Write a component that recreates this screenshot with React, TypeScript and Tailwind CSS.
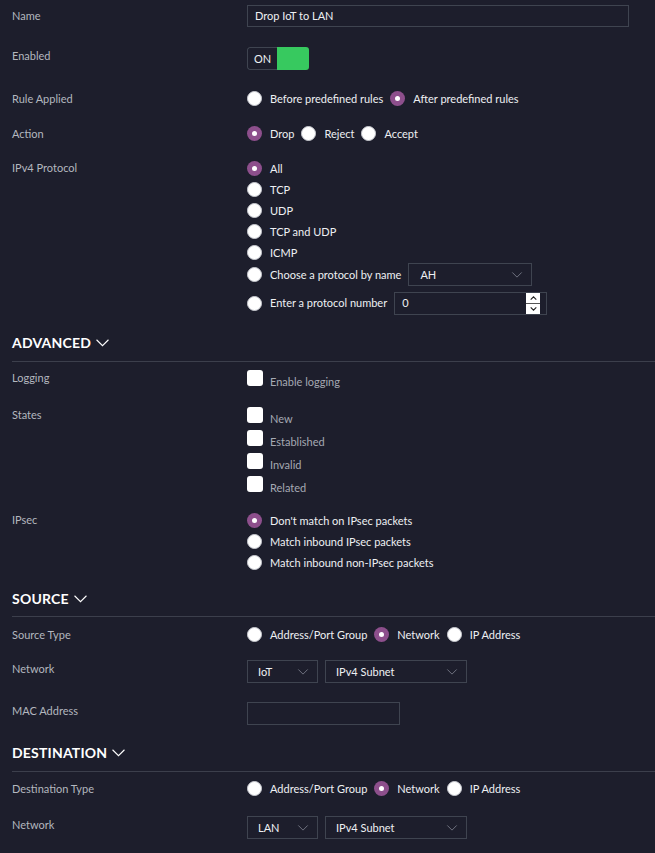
import React from "react";

const Chevron = ({ className = "" }: { className?: string }) => (
  <svg viewBox="0 0 12 7" className={className} fill="none" stroke="currentColor" strokeWidth="1">
    <path d="M0.5 0.5 L6 6 L11.5 0.5" />
  </svg>
);

const Radio = ({ checked = false }: { checked?: boolean }) =>
  checked ? (
    <span className="w-[15px] h-[15px] rounded-full bg-[#8d4f8c] flex items-center justify-center shrink-0">
      <span className="w-[5px] h-[5px] rounded-full bg-white" />
    </span>
  ) : (
    <span className="w-[15px] h-[15px] rounded-full bg-white border border-[#c9cbd1] shrink-0" />
  );

const RadioOpt = ({ label, checked }: { label: string; checked?: boolean }) => (
  <span className="flex items-center">
    <Radio checked={checked} />
    <span className="ml-2 text-[#eef0f3]">{label}</span>
  </span>
);

const Check = ({ label }: { label: string }) => (
  <div className="flex items-start h-[16px]">
    <span className="w-[16px] h-[16px] rounded-[3px] bg-white shrink-0" />
    <span className="ml-[7px] pt-[5px] leading-[14px] text-[#a5a9b3] whitespace-nowrap">{label}</span>
  </div>
);

const Select = ({ value, w }: { value: string; w: string }) => (
  <div className={`${w} h-[23px] border border-[#3f4450] flex items-center justify-between pl-[10px] pr-[8px]`}>
    <span className="text-[#eef0f3]">{value}</span>
    <Chevron className="w-[12px] h-[6px] text-[#7d818d]" />
  </div>
);

const Label = ({ children, className = "" }: { children: React.ReactNode; className?: string }) => (
  <div className={`w-[247px] pl-3 shrink-0 text-[#b3b7bf] ${className}`}>{children}</div>
);

const Header = ({ title, className = "" }: { title: string; className?: string }) => (
  <div className={`ml-3 border-b border-[#3c3f4c] ${className}`}>
    <div className="h-[20px] flex items-center gap-[5px] text-white font-bold text-[14px] tracking-[0.2px]">
      {title}
      <Chevron className="w-[13px] h-[8px] text-white" />
    </div>
  </div>
);

export default function App() {
  return (
    <div
      className="min-h-[853px] bg-[#1d1e2c] text-[11px] leading-[14px] pt-[5px]"
      style={{ fontFamily: "Lato, 'Noto Sans', sans-serif" }}
    >
      {/* Name */}
      <div className="flex items-center h-[22px]">
        <Label>Name</Label>
        <div className="w-[382px] h-[22px] border border-[#3f4450] flex items-center px-[7px] text-[#eef0f3]">
          Drop IoT to LAN
        </div>
      </div>

      {/* Enabled */}
      <div className="flex items-start mt-[20px] h-[23px]">
        <Label className="pt-[2px]">Enabled</Label>
        <div className="flex h-[23px] rounded-[3px] overflow-hidden">
          <div className="w-[30px] border border-r-0 border-[#3f4450] rounded-l-[3px] flex items-center justify-center text-[#eef0f3]">
            ON
          </div>
          <div className="w-[32px] bg-[#37c95f]" />
        </div>
      </div>

      {/* Rule Applied */}
      <div className="flex items-center mt-[18px] h-[21px]">
        <Label>Rule Applied</Label>
        <div className="flex items-center gap-[7px]">
          <RadioOpt label="Before predefined rules" />
          <RadioOpt label="After predefined rules" checked />
        </div>
      </div>

      {/* Action */}
      <div className="flex items-center mt-[14px] h-[21px]">
        <Label>Action</Label>
        <div className="flex items-center gap-[7px]">
          <RadioOpt label="Drop" checked />
          <RadioOpt label="Reject" />
          <RadioOpt label="Accept" />
        </div>
      </div>

      {/* IPv4 Protocol */}
      <div className="flex items-start mt-[14px]">
        <Label className="pt-[3px]">IPv4 Protocol</Label>
        <div className="flex flex-col">
          {["All", "TCP", "UDP", "TCP and UDP", "ICMP"].map((p, i) => (
            <div key={p} className="h-[21px] flex items-center">
              <RadioOpt label={p} checked={i === 0} />
            </div>
          ))}
          <div className="h-[23px] flex items-center">
            <RadioOpt label="Choose a protocol by name" />
            <div className="ml-[7px] w-[124px] h-[23px] border border-[#3f4450] flex items-center justify-between pl-[11px] pr-[8px]">
              <span className="text-[#eef0f3]">AH</span>
              <Chevron className="w-[12px] h-[6px] text-[#7d818d]" />
            </div>
          </div>
          <div className="h-[24px] mt-[5px] flex items-center">
            <RadioOpt label="Enter a protocol number" />
            <div className="ml-[7px] w-[153px] h-[23px] border border-[#3f4450] flex items-center justify-between pl-[7px] pr-[6px]">
              <span className="text-[#eef0f3]">0</span>
              <div className="w-[14px] h-[21px] bg-white flex flex-col">
                <div className="flex-1 flex items-center justify-center border-b border-[#555]">
                  <svg viewBox="0 0 8 5" className="w-[7px] h-[4px]" fill="none" stroke="#222" strokeWidth="1.4">
                    <path d="M0.5 4.5 L4 1 L7.5 4.5" />
                  </svg>
                </div>
                <div className="flex-1 flex items-center justify-center">
                  <svg viewBox="0 0 8 5" className="w-[7px] h-[4px]" fill="none" stroke="#222" strokeWidth="1.4">
                    <path d="M0.5 0.5 L4 4 L7.5 0.5" />
                  </svg>
                </div>
              </div>
            </div>
          </div>
        </div>
      </div>

      <Header title="ADVANCED" className="mt-[18px] pb-[8px]" />

      {/* Logging */}
      <div className="flex items-start mt-[8px]">
        <Label className="pt-[1px]">Logging</Label>
        <Check label="Enable logging" />
      </div>

      {/* States */}
      <div className="flex items-start mt-[21px]">
        <Label className="pt-[1px]">States</Label>
        <div className="flex flex-col gap-[7px]">
          <Check label="New" />
          <Check label="Established" />
          <Check label="Invalid" />
          <Check label="Related" />
        </div>
      </div>

      {/* IPsec */}
      <div className="flex items-start mt-[18px]">
        <Label className="pt-[3px]">IPsec</Label>
        <div className="flex flex-col">
          <div className="h-[21px] flex items-center"><RadioOpt label="Don't match on IPsec packets" checked /></div>
          <div className="h-[21px] flex items-center"><RadioOpt label="Match inbound IPsec packets" /></div>
          <div className="h-[21px] flex items-center"><RadioOpt label="Match inbound non-IPsec packets" /></div>
        </div>
      </div>

      <Header title="SOURCE" className="mt-[16px] pb-[7px]" />

      <div className="flex items-center mt-[7px] h-[21px]">
        <Label>Source Type</Label>
        <div className="flex items-center gap-[7px]">
          <RadioOpt label="Address/Port Group" />
          <RadioOpt label="Network" checked />
          <RadioOpt label="IP Address" />
        </div>
      </div>

      <div className="flex items-start mt-[15px]">
        <Label className="pt-[2px]">Network</Label>
        <div className="flex gap-[7px]">
          <Select value="IoT" w="w-[71px]" />
          <Select value="IPv4 Subnet" w="w-[142px]" />
        </div>
      </div>

      <div className="flex items-start mt-[19px]">
        <Label className="pt-[2px]">MAC Address</Label>
        <div className="w-[153px] h-[23px] border border-[#3f4450]" />
      </div>

      <Header title="DESTINATION" className="mt-[18px] pb-[8px]" />

      <div className="flex items-center mt-[6px] h-[21px]">
        <Label>Destination Type</Label>
        <div className="flex items-center gap-[7px]">
          <RadioOpt label="Address/Port Group" />
          <RadioOpt label="Network" checked />
          <RadioOpt label="IP Address" />
        </div>
      </div>

      <div className="flex items-start mt-[17px]">
        <Label className="pt-[2px]">Network</Label>
        <div className="flex gap-[7px]">
          <Select value="LAN" w="w-[71px]" />
          <Select value="IPv4 Subnet" w="w-[142px]" />
        </div>
      </div>
    </div>
  );
}
